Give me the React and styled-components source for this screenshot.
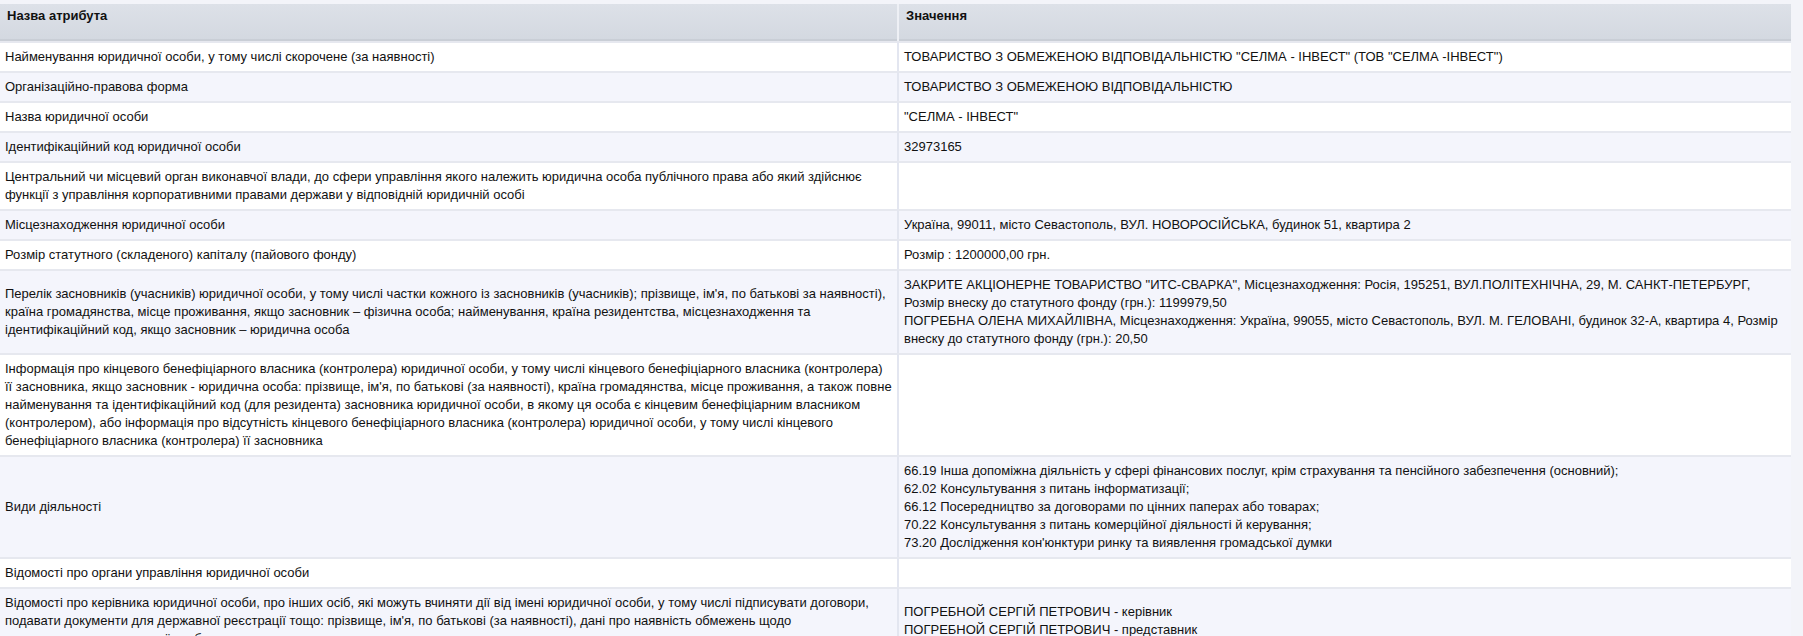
import React from 'react'
import styled, { createGlobalStyle } from 'styled-components'

const Global = createGlobalStyle`
  body { margin: 0; background: #f3f4f9; font-family: 'Liberation Sans', Arial, sans-serif; }
`

const rows = [
  ['Найменування юридичної особи, у тому числі скорочене (за наявності)', ['ТОВАРИСТВО З ОБМЕЖЕНОЮ ВІДПОВІДАЛЬНІСТЮ "СЕЛМА - ІНВЕСТ" (ТОВ "СЕЛМА -ІНВЕСТ")']],
  ['Організаційно-правова форма', ['ТОВАРИСТВО З ОБМЕЖЕНОЮ ВІДПОВІДАЛЬНІСТЮ']],
  ['Назва юридичної особи', ['"СЕЛМА - ІНВЕСТ"']],
  ['Ідентифікаційний код юридичної особи', ['32973165']],
  ['Центральний чи місцевий орган виконавчої влади, до сфери управління якого належить юридична особа публічного права або який здійснює функції з управління корпоративними правами держави у відповідній юридичній особі', []],
  ['Місцезнаходження юридичної особи', ['Україна, 99011, місто Севастополь, ВУЛ. НОВОРОСІЙСЬКА, будинок 51, квартира 2']],
  ['Розмір статутного (складеного) капіталу (пайового фонду)', ['Розмір : 1200000,00 грн.']],
  ['Перелік засновників (учасників) юридичної особи, у тому числі частки кожного із засновників (учасників); прізвище, ім\'я, по батькові за наявності), країна громадянства, місце проживання, якщо засновник – фізична особа; найменування, країна резидентства, місцезнаходження та ідентифікаційний код, якщо засновник – юридична особа', [
    'ЗАКРИТЕ АКЦІОНЕРНЕ ТОВАРИСТВО "ИТС-СВАРКА", Місцезнаходження: Росія, 195251, ВУЛ.ПОЛІТЕХНІЧНА, 29, М. САНКТ-ПЕТЕРБУРГ, Розмір внеску до статутного фонду (грн.): 1199979,50',
    'ПОГРЕБНА ОЛЕНА МИХАЙЛІВНА, Місцезнаходження: Україна, 99055, місто Севастополь, ВУЛ. М. ГЕЛОВАНІ, будинок 32-А, квартира 4, Розмір внеску до статутного фонду (грн.): 20,50',
  ]],
  ['Інформація про кінцевого бенефіціарного власника (контролера) юридичної особи, у тому числі кінцевого бенефіціарного власника (контролера) її засновника, якщо засновник - юридична особа: прізвище, ім\'я, по батькові (за наявності), країна громадянства, місце проживання, а також повне найменування та ідентифікаційний код (для резидента) засновника юридичної особи, в якому ця особа є кінцевим бенефіціарним власником (контролером), або інформація про відсутність кінцевого бенефіціарного власника (контролера) юридичної особи, у тому числі кінцевого бенефіціарного власника (контролера) її засновника', []],
  ['Види діяльності', [
    '66.19 Інша допоміжна діяльність у сфері фінансових послуг, крім страхування та пенсійного забезпечення (основний);',
    '62.02 Консультування з питань інформатизації;',
    '66.12 Посередництво за договорами по цінних паперах або товарах;',
    '70.22 Консультування з питань комерційної діяльності й керування;',
    '73.20 Дослідження кон\'юнктури ринку та виявлення громадської думки',
  ]],
  ['Відомості про органи управління юридичної особи', []],
  ['Відомості про керівника юридичної особи, про інших осіб, які можуть вчиняти дії від імені юридичної особи, у тому числі підписувати договори, подавати документи для державної реєстрації тощо: прізвище, ім\'я, по батькові (за наявності), дані про наявність обмежень щодо представництва юридичної особи', [
    'ПОГРЕБНОЙ СЕРГІЙ ПЕТРОВИЧ - керівник',
    'ПОГРЕБНОЙ СЕРГІЙ ПЕТРОВИЧ - представник',
  ]],
]

const Page = styled.div`
  padding: 4px 12px 0 0;
  height: 636px;
  overflow: hidden;
  box-sizing: border-box;
`

const Table = styled.div`
  display: grid;
  grid-template-columns: 897px 1fr;
  width: 1791px;
`

const Head = styled.div`
  background: linear-gradient(#dde1e8, #d3d8e0);
  font-weight: bold;
  font-size: 13px;
  color: #111;
  padding: 4px 7px 18px;
  border-left: ${p => (p.$right ? '2px solid #eef0f5' : 'none')};
  box-shadow: inset 0 -2px 0 #c9ced6;
`

const Cell = styled.div`
  background: ${p => (p.$odd ? '#f4f5fc' : '#ffffff')};
  border-top: 2px solid #e6e8ef;
  border-left: ${p => (p.$right ? '2px solid #e3e6f0' : 'none')};
  padding: 5px 5px;
  font-size: 13px;
  line-height: 18px;
  color: #111;
  display: flex;
  flex-direction: column;
  justify-content: center;
  min-height: 18px;
`

export default function App() {
  return (
    <>
      <Global />
      <Page>
        <Table>
          <Head>Назва атрибута</Head>
          <Head $right>Значення</Head>
          {rows.map(([name, vals], i) => (
            <React.Fragment key={i}>
              <Cell $odd={i % 2 === 1}>{name}</Cell>
              <Cell $odd={i % 2 === 1} $right>
                {vals.map((v, j) => (
                  <div key={j}>{v}</div>
                ))}
              </Cell>
            </React.Fragment>
          ))}
          <Cell />
          <Cell $right />
        </Table>
      </Page>
    </>
  )
}
